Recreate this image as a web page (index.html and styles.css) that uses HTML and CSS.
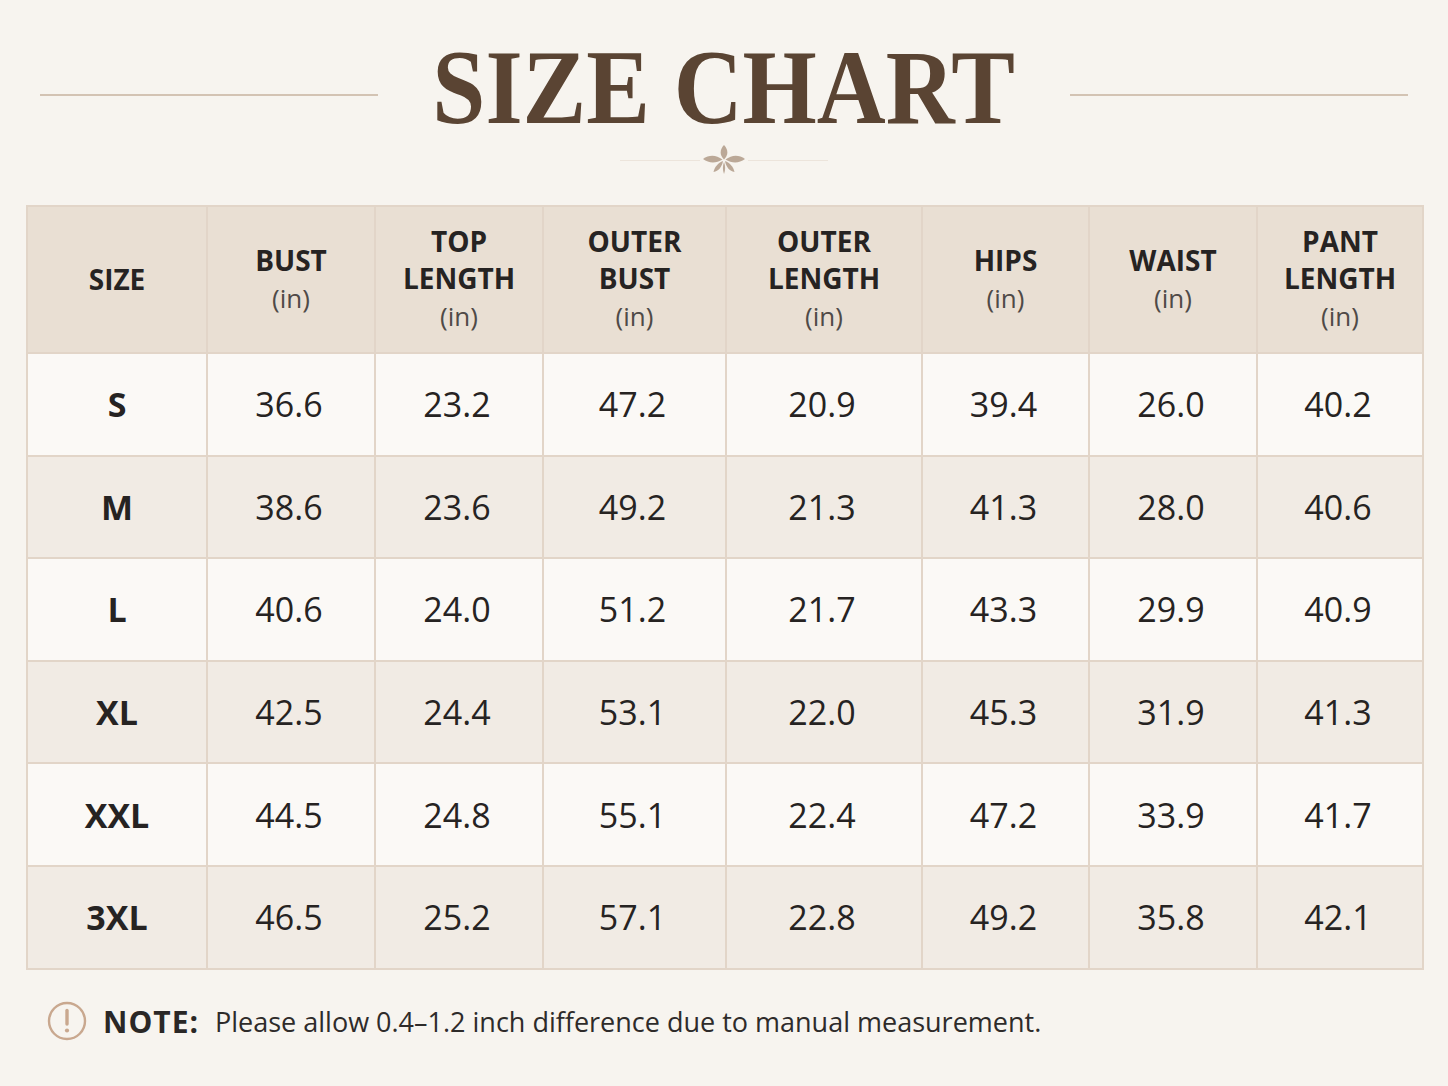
FILE: index.html
```html
<!DOCTYPE html>
<html lang="en">
<head>
<meta charset="utf-8">
<title>Size Chart</title>
<link rel="stylesheet" href="styles.css">
</head>
<body>
<div class="page">
  <header class="title-row">
    <span class="rule"></span>
    <h1 class="title">SIZE CHART</h1>
    <span class="rule"></span>
  </header>
  <div class="ornament-row">
    <span class="thin"></span>
    <svg class="ornament" width="44" height="32" viewBox="0 0 44 32">
      <g fill="#bba897">
        <path d="M22 1 C17.5 6 17.5 11 22 15.5 C26.5 11 26.5 6 22 1 Z"/>
        <path d="M1 15 C7 10.5 14 10.5 20.5 15.5 C14 19.5 7 19.5 1 15 Z"/>
        <path d="M43 15 C37 10.5 30 10.5 23.5 15.5 C30 19.5 37 19.5 43 15 Z"/>
        <path d="M21 17 C16 19 12.5 23 11.5 28 C16.5 27 20 23 21 17 Z"/>
        <path d="M23 17 C28 19 31.5 23 32.5 28 C27.5 27 24 23 23 17 Z"/>
        <path d="M22 18 C20.5 22 20.5 26 22 30 C23.5 26 23.5 22 22 18 Z"/>
      </g>
    </svg>
    <span class="thin"></span>
  </div>

  <table class="chart">
    <colgroup>
      <col class="c1"><col class="c2"><col class="c3"><col class="c4"><col class="c5"><col class="c6"><col class="c7"><col class="c8">
    </colgroup>
    <thead>
      <tr>
        <th><span class="h">SIZE</span></th>
        <th><span class="h">BUST</span><span class="u">(in)</span></th>
        <th><span class="h">TOP</span><span class="h">LENGTH</span><span class="u">(in)</span></th>
        <th><span class="h">OUTER</span><span class="h">BUST</span><span class="u">(in)</span></th>
        <th><span class="h">OUTER</span><span class="h">LENGTH</span><span class="u">(in)</span></th>
        <th><span class="h">HIPS</span><span class="u">(in)</span></th>
        <th><span class="h">WAIST</span><span class="u">(in)</span></th>
        <th><span class="h">PANT</span><span class="h">LENGTH</span><span class="u">(in)</span></th>
      </tr>
    </thead>
    <tbody>
      <tr><td class="sz">S</td><td>36.6</td><td>23.2</td><td>47.2</td><td>20.9</td><td>39.4</td><td>26.0</td><td>40.2</td></tr>
      <tr><td class="sz">M</td><td>38.6</td><td>23.6</td><td>49.2</td><td>21.3</td><td>41.3</td><td>28.0</td><td>40.6</td></tr>
      <tr><td class="sz">L</td><td>40.6</td><td>24.0</td><td>51.2</td><td>21.7</td><td>43.3</td><td>29.9</td><td>40.9</td></tr>
      <tr><td class="sz">XL</td><td>42.5</td><td>24.4</td><td>53.1</td><td>22.0</td><td>45.3</td><td>31.9</td><td>41.3</td></tr>
      <tr><td class="sz">XXL</td><td>44.5</td><td>24.8</td><td>55.1</td><td>22.4</td><td>47.2</td><td>33.9</td><td>41.7</td></tr>
      <tr><td class="sz">3XL</td><td>46.5</td><td>25.2</td><td>57.1</td><td>22.8</td><td>49.2</td><td>35.8</td><td>42.1</td></tr>
    </tbody>
  </table>

  <p class="note">
    <svg class="note-icon" width="40" height="40" viewBox="0 0 40 40">
      <circle cx="20" cy="20" r="18" fill="none" stroke="#c9a88f" stroke-width="2.4"/>
      <path d="M20 9.5 L20 23" stroke="#c9a88f" stroke-width="3.4" stroke-linecap="round"/>
      <circle cx="20" cy="29.5" r="2.1" fill="#c9a88f"/>
    </svg>
    <b>NOTE:</b>
    <span class="note-text">Please allow 0.4–1.2 inch difference due to manual measurement.</span>
  </p>
</div>
</body>
</html>
```

FILE: styles.css
```css
* { box-sizing: border-box; }
html, body {
  margin: 0;
  padding: 0;
  background: #f7f4ef;
}
body {
  font-family: "Open Sans", "DejaVu Sans", sans-serif;
  color: #2a2726;
}
.page {
  width: 1448px;
  height: 1086px;
  padding: 38px 26px 0 26px;
}
.title-row {
  display: flex;
  align-items: center;
  padding: 0 14px;
  height: 100px;
}
.rule {
  flex: 1;
  height: 2px;
  background: #d3c3b3;
  margin-top: 14px;
}
.title {
  margin: 0 22px;
  font-family: "Liberation Serif", "Times New Roman", serif;
  font-weight: bold;
  font-size: 106px;
  line-height: 100px;
  color: #5a4433;
  transform: scaleX(0.9);
}
.ornament-row {
  display: flex;
  justify-content: center;
  align-items: center;
  height: 44px;
}
.thin {
  width: 80px;
  height: 1px;
  background: #ece4db;
}
.ornament { margin: 0 2px; }

.chart {
  margin-top: 23px;
  width: 1396px;
  border-collapse: collapse;
  table-layout: fixed;
  border: 2px solid #e2d5c8;
}
.c1 { width: 180px; }
.c2 { width: 168px; }
.c3 { width: 168px; }
.c4 { width: 183px; }
.c5 { width: 196px; }
.c6 { width: 167px; }
.c7 { width: 168px; }
.c8 { width: 166px; }

.chart th, .chart td {
  border: 2px solid #e2d5c8;
  text-align: center;
  vertical-align: middle;
  padding: 0;
}
.chart thead th {
  height: 147px;
  background: #e9dfd3;
}
.chart th .h {
  display: block;
  font-size: 28px;
  line-height: 37px;
  color: #262322;
  font-weight: 700;
}
.chart th .u {
  display: block;
  font-size: 26px;
  line-height: 39px;
  font-weight: 400;
  color: #4f4a47;
}
.chart tbody td {
  height: 102.6px;
  font-size: 34px;
  color: #262322;
  padding-right: 4px;
}
.chart tbody tr:nth-child(odd) td { background: #fbf9f6; }
.chart tbody tr:nth-child(even) td { background: #f1ebe4; }
.chart td.sz { font-weight: 700; padding-right: 0; }

.note {
  display: flex;
  align-items: center;
  margin: 31px 0 0 21px;
  font-size: 27px;
  color: #2e2b2a;
}
.note-icon { margin-right: 16px; flex: none; }
.note b { font-size: 30px; font-weight: 700; letter-spacing: 1px; margin-right: 16px; color: #2a2726; }
```
